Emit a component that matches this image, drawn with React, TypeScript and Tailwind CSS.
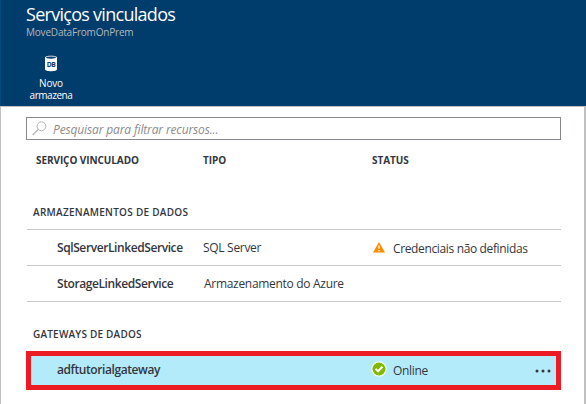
import type { ReactNode } from "react";

function DatabaseIcon() {
  return (
    <svg width="14" height="17" viewBox="0 0 14 17" className="block">
      <path d="M1 2.6C1 .2 13 .2 13 2.6v11.6c0 2.6-12 2.6-12 0z" fill="#fff" />
      <ellipse cx="7" cy="2.6" rx="4.9" ry="1.1" fill="#003c6c" />
      <text x="7" y="11.8" textAnchor="middle" fontSize="6.8" fontWeight="700" fill="#003c6c" fontFamily="Open Sans, sans-serif">DB</text>
    </svg>
  );
}

function SearchIcon() {
  return (
    <svg width="15" height="15" viewBox="0 0 15 15" fill="none" stroke="#b4b4b4" className="block">
      <circle cx="9.5" cy="5.3" r="4.4" strokeWidth="1" />
      <path d="M6.3 8.5L.7 14" strokeWidth="1.3" />
    </svg>
  );
}

function WarningIcon() {
  return (
    <svg width="12" height="11" viewBox="0 0 12 11" className="block">
      <path d="M6 0L12 10.5H0z" fill="#ff8c00" />
      <path d="M6 3.4v3.4M6 7.9v1.3" stroke="#fff" strokeWidth="1.2" />
    </svg>
  );
}

function OkIcon() {
  return (
    <svg width="16" height="16" viewBox="0 0 16 16" className="block">
      <circle cx="8" cy="8" r="7.1" fill="#7fba00" stroke="#f4fbe8" strokeWidth="1.2" />
      <path d="M4.5 7.9L7 10.3l4.4-4.6" fill="none" stroke="#fff" strokeWidth="2" />
    </svg>
  );
}

function Row({ name, type, children }: { name: string; type: ReactNode; children?: ReactNode }) {
  return (
    <div className="flex h-9 border-t border-[#c6c6c6] pl-[30px] pt-[9px] text-[12px] leading-[18px]">
      <div className="w-[146px] font-semibold tracking-[-0.41px]">{name}</div>
      <div className="w-[170px] tracking-[-0.3px]">{type}</div>
      <div className="flex">{children}</div>
    </div>
  );
}

export default function App() {
  return (
    <div className="flex h-[404px] w-[586px] flex-col overflow-hidden whitespace-nowrap bg-white font-['Open_Sans','Noto_Sans',sans-serif] text-[#33363d]">
      <header className="h-[106px] shrink-0 border-l border-[#004a80] bg-[#003c6c] pl-[25px] text-white">
        <h1 className="h-[26px] pt-px text-[18px] leading-[26px] tracking-[-0.72px]">Serviços vinculados</h1>
        <p className="h-[14px] text-[10px] leading-[13px] tracking-[-0.2px] text-[#b3b8bd]">MoveDataFromOnPrem</p>
        <button className="mt-[15px] flex w-[50px] flex-col items-center text-[10px] leading-[12px] tracking-[-0.45px]">
          <DatabaseIcon />
          <span className="mt-[5px] tracking-[-0.2px]">Novo</span>
          <span>armazena</span>
        </button>
      </header>
      <main className="flex-1 border-l border-r-2 border-t border-[#c0c0c0] pl-[25px] pr-[23px] pt-[10px]">
        <div className="flex h-[23px] items-center border border-[#85888c] pl-[5px]">
          <SearchIcon />
          <span className="ml-[6px] pt-[2px] text-[12px] italic leading-[18px] tracking-[-0.14px] text-[#8b8b8b]">Pesquisar para filtrar recursos...</span>
        </div>
        <div className="flex h-[55px] pl-[10px] pt-[12px] text-[10px] font-bold leading-[16px] tracking-[-0.08px]">
          <div className="w-[167px]">SERVIÇO VINCULADO</div>
          <div className="w-[169px]">TIPO</div>
          <div>STATUS</div>
        </div>
        <h2 className="h-[34px] pl-[7px] pt-[9px] text-[10px] font-semibold leading-[16px] tracking-[0.27px]">ARMAZENAMENTOS DE DADOS</h2>
        <div className="ml-px border-b border-[#c6c6c6]">
          <Row name="SqlServerLinkedService" type="SQL Server">
            <div className="mr-[8px] mt-[3px]"><WarningIcon /></div>
            <span className="pt-[1px] tracking-[-0.36px]">Credenciais não definidas</span>
          </Row>
          <Row name="StorageLinkedService" type={<span className="pl-px">Armazenamento do Azure</span>} />
        </div>
        <h2 className="h-[49px] pl-[7px] pt-[24px] text-[10px] font-semibold leading-[16px] tracking-[0.2px]">GATEWAYS DE DADOS</h2>
        <div className="flex h-[39px] border-[5px] border-[#ed1c24] bg-[#b3ebfb] pl-[26px] pt-[5px] text-[12px] leading-[18px]">
          <div className="w-[314px] font-semibold tracking-[-0.42px]">adftutorialgateway</div>
          <OkIcon />
          <span className="ml-[6px] pt-[1px] tracking-[-0.3px]">Online</span>
          <svg width="16" height="4" viewBox="0 0 16 4" className="ml-auto mr-[5px] mt-[8px]" fill="#33363d">
            <circle cx="2" cy="2" r="1.5" />
            <circle cx="8" cy="2" r="1.5" />
            <circle cx="14" cy="2" r="1.5" />
          </svg>
        </div>
      </main>
    </div>
  );
}
